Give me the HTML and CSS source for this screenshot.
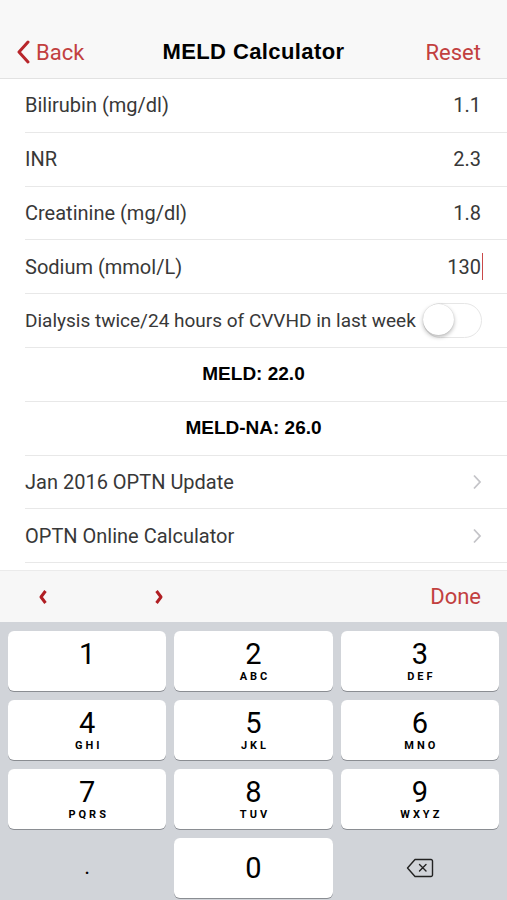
FILE: index.html
```html
<!DOCTYPE html>
<html lang="en">
<head>
    <meta charset="UTF-8">
    <meta name="viewport" content="width=device-width, initial-scale=1.0">
    <title>MELD Calculator</title>
    <link rel="stylesheet" href="styles.css">
</head>
<body>
    <header class="nav">
        <a class="nav-back" href="#">
            <svg width="14" height="24" viewBox="0 0 14 24"><path d="M12 2 L3 12 L12 22" fill="none" stroke="#b8262b" stroke-width="3" stroke-linecap="round" stroke-linejoin="round"/></svg>
            Back
        </a>
        <h1 class="nav-title">MELD Calculator</h1>
        <a class="nav-reset" href="#">Reset</a>
    </header>

    <ul class="list">
        <li class="row"><span>Bilirubin (mg/dl)</span><span class="value">1.1</span></li>
        <li class="row"><span>INR</span><span class="value">2.3</span></li>
        <li class="row"><span>Creatinine (mg/dl)</span><span class="value">1.8</span></li>
        <li class="row"><span>Sodium (mmol/L)</span><span class="value">130<i class="caret"></i></span></li>
        <li class="row row-switch"><span>Dialysis twice/24 hours of CVVHD in last week</span><span class="switch"><span class="knob"></span></span></li>
        <li class="row row-result">MELD: 22.0</li>
        <li class="row row-result">MELD-NA: 26.0</li>
        <li class="row"><span>Jan 2016 OPTN Update</span><svg class="chev" width="10" height="16" viewBox="0 0 10 16"><path d="M2 1.5 L8 8 L2 14.5" fill="none" stroke="#c4c4c8" stroke-width="1.8"/></svg></li>
        <li class="row"><span>OPTN Online Calculator</span><svg class="chev" width="10" height="16" viewBox="0 0 10 16"><path d="M2 1.5 L8 8 L2 14.5" fill="none" stroke="#c4c4c8" stroke-width="1.8"/></svg></li>
    </ul>

    <div class="toolbar">
        <div class="arrows">
            <svg width="10" height="16" viewBox="0 0 10 16"><path d="M7.5 2 L3 8 L7.5 14" fill="none" stroke="#b01e23" stroke-width="3" stroke-linejoin="round"/></svg>
            <svg width="10" height="16" viewBox="0 0 10 16"><path d="M2.5 2 L7 8 L2.5 14" fill="none" stroke="#b01e23" stroke-width="3" stroke-linejoin="round"/></svg>
        </div>
        <span class="done">Done</span>
    </div>

    <div class="keyboard">
        <div class="key"><span class="digit">1</span><span class="letters"></span></div>
        <div class="key"><span class="digit">2</span><span class="letters">ABC</span></div>
        <div class="key"><span class="digit">3</span><span class="letters">DEF</span></div>
        <div class="key"><span class="digit">4</span><span class="letters">GHI</span></div>
        <div class="key"><span class="digit">5</span><span class="letters">JKL</span></div>
        <div class="key"><span class="digit">6</span><span class="letters">MNO</span></div>
        <div class="key"><span class="digit">7</span><span class="letters">PQRS</span></div>
        <div class="key"><span class="digit">8</span><span class="letters">TUV</span></div>
        <div class="key"><span class="digit">9</span><span class="letters">WXYZ</span></div>
        <div class="key key-flat"><span class="dot">.</span></div>
        <div class="key key-zero"><span class="digit">0</span></div>
        <div class="key key-flat">
            <svg width="28" height="20" viewBox="0 0 28 20"><path d="M9 1.5 H25 A1.5 1.5 0 0 1 26.5 3 V17 A1.5 1.5 0 0 1 25 18.5 H9 L1.5 10 Z" fill="none" stroke="#222" stroke-width="1.4" stroke-linejoin="round"/><path d="M13.5 6.5 L20 13 M20 6.5 L13.5 13" stroke="#222" stroke-width="1.4" stroke-linecap="round"/></svg>
        </div>
    </div>
</body>
</html>
```

FILE: styles.css
```css
* {
    box-sizing: border-box;
}
body {
    margin: 0;
    font-family: Roboto, "Liberation Sans", sans-serif;
    background: #fff;
    color: #333;
    width: 507px;
    height: 900px;
    overflow: hidden;
}
.nav {
    height: 79px;
    padding: 26px 26px 0 16px;
    background: #f8f8f8;
    border-bottom: 1px solid #e2e2e2;
    display: flex;
    align-items: center;
    justify-content: space-between;
    position: relative;
}
.nav a {
    position: relative;
    z-index: 1;
    color: #c2403f;
    text-decoration: none;
    font-size: 22px;
}
.nav-back {
    display: flex;
    align-items: center;
    gap: 6px;
}
.nav-title {
    position: absolute;
    left: 0;
    right: 0;
    top: 26px;
    bottom: 0;
    margin: 0;
    display: flex;
    align-items: center;
    justify-content: center;
    font-family: "Liberation Sans", Arial, sans-serif;
    font-size: 22px;
    letter-spacing: 0.4px;
    font-weight: 700;
    color: #000;
    pointer-events: none;
}
.list {
    list-style: none;
    margin: 0;
    padding: 0;
}
.row {
    margin-left: 25px;
    padding-right: 26px;
    height: 53.8px;
    border-bottom: 1px solid #e8e8e8;
    display: flex;
    align-items: center;
    justify-content: space-between;
    font-size: 20px;
    color: #383838;
}
.value {
    position: relative;
}
.caret {
    position: absolute;
    right: -2px;
    top: -2px;
    width: 1.5px;
    height: 27px;
    background: #c94a4a;
}
.row-switch {
    font-size: 19px;
    padding-right: 25px;
}
.switch {
    flex: none;
    width: 59px;
    height: 35px;
    border-radius: 18px;
    border: 1.5px solid #e6e6e6;
    background: #fff;
    position: relative;
    margin-left: -4px;
}
.knob {
    position: absolute;
    left: -1px;
    top: 0;
    width: 31px;
    height: 31px;
    border-radius: 50%;
    background: #fff;
    box-shadow: 0 2px 4px rgba(0, 0, 0, 0.28), 0 0 1px rgba(0, 0, 0, 0.2);
}
.row-result {
    justify-content: center;
    font-family: "Liberation Sans", Arial, sans-serif;
    font-size: 19px;
    font-weight: 700;
    color: #000;
    padding-right: 0;
    text-indent: -25px;
}
.chev {
    flex: none;
    margin-right: -1px;
}
.toolbar {
    margin-top: 7px;
    height: 52px;
    background: #f7f7f7;
    border-top: 1px solid #ebebeb;
    display: flex;
    align-items: center;
    justify-content: space-between;
    padding: 0 26px 0 38px;
}
.arrows {
    display: flex;
    gap: 106px;
}
.done {
    color: #c2403f;
    font-size: 22px;
}
.keyboard {
    height: 279px;
    background: #d1d4d9;
    padding: 9px 8px 2px;
    display: grid;
    grid-template-columns: repeat(3, 1fr);
    grid-auto-rows: 60px;
    gap: 9px 8px;
}
.key {
    background: #fff;
    border-radius: 6px;
    box-shadow: 0 1px 0 #8a8d92;
    display: flex;
    flex-direction: column;
    align-items: center;
    justify-content: flex-start;
    padding-top: 6px;
    color: #000;
}
.digit {
    font-size: 29px;
    line-height: 34px;
}
.letters {
    font-size: 11px;
    font-weight: 700;
    letter-spacing: 3px;
    margin-right: -3px;
    line-height: 12px;
}
.key-zero {
    justify-content: center;
    padding-top: 0;
}
.key-flat {
    background: transparent;
    box-shadow: none;
    justify-content: center;
    padding-top: 0;
}
.dot {
    font-size: 22px;
    margin-top: -4px;
}
```
